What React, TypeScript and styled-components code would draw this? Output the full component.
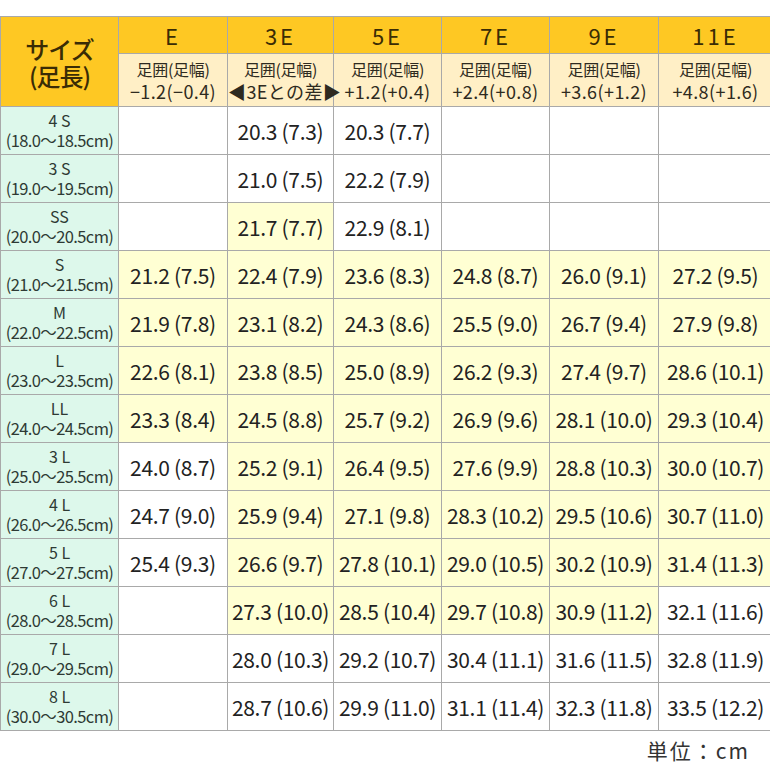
import React from "react";
import styled, { createGlobalStyle } from "styled-components";

type Row = {
    size: string;
    range: string;
    cells: (string | null)[];
    marks: boolean[];
};

const colWidths = [118, 109, 106, 108, 108, 109, 114];
const widths = ["E", "3E", "5E", "7E", "9E", "11E"];
const diffs = ["−1.2(−0.4)", "◀3Eとの差▶", "+1.2(+0.4)", "+2.4(+0.8)", "+3.6(+1.2)", "+4.8(+1.6)"];

const Y = true;
const N = false;

const rows: Row[] = [
    { size: "4 S", range: "(18.0～18.5cm)", cells: [null, "20.3 (7.3)", "20.3 (7.7)", null, null, null], marks: [N, N, N, N, N, N] },
    { size: "3 S", range: "(19.0～19.5cm)", cells: [null, "21.0 (7.5)", "22.2 (7.9)", null, null, null], marks: [N, N, N, N, N, N] },
    { size: "SS", range: "(20.0～20.5cm)", cells: [null, "21.7 (7.7)", "22.9 (8.1)", null, null, null], marks: [N, Y, N, N, N, N] },
    { size: "S", range: "(21.0～21.5cm)", cells: ["21.2 (7.5)", "22.4 (7.9)", "23.6 (8.3)", "24.8 (8.7)", "26.0 (9.1)", "27.2 (9.5)"], marks: [Y, Y, Y, Y, Y, Y] },
    { size: "M", range: "(22.0～22.5cm)", cells: ["21.9 (7.8)", "23.1 (8.2)", "24.3 (8.6)", "25.5 (9.0)", "26.7 (9.4)", "27.9 (9.8)"], marks: [Y, Y, Y, Y, Y, Y] },
    { size: "L", range: "(23.0～23.5cm)", cells: ["22.6 (8.1)", "23.8 (8.5)", "25.0 (8.9)", "26.2 (9.3)", "27.4 (9.7)", "28.6 (10.1)"], marks: [Y, Y, Y, Y, Y, Y] },
    { size: "LL", range: "(24.0～24.5cm)", cells: ["23.3 (8.4)", "24.5 (8.8)", "25.7 (9.2)", "26.9 (9.6)", "28.1 (10.0)", "29.3 (10.4)"], marks: [Y, Y, Y, Y, Y, Y] },
    { size: "3 L", range: "(25.0～25.5cm)", cells: ["24.0 (8.7)", "25.2 (9.1)", "26.4 (9.5)", "27.6 (9.9)", "28.8 (10.3)", "30.0 (10.7)"], marks: [N, Y, Y, Y, Y, Y] },
    { size: "4 L", range: "(26.0～26.5cm)", cells: ["24.7 (9.0)", "25.9 (9.4)", "27.1 (9.8)", "28.3 (10.2)", "29.5 (10.6)", "30.7 (11.0)"], marks: [N, Y, Y, Y, Y, Y] },
    { size: "5 L", range: "(27.0～27.5cm)", cells: ["25.4 (9.3)", "26.6 (9.7)", "27.8 (10.1)", "29.0 (10.5)", "30.2 (10.9)", "31.4 (11.3)"], marks: [N, Y, Y, Y, Y, Y] },
    { size: "6 L", range: "(28.0～28.5cm)", cells: [null, "27.3 (10.0)", "28.5 (10.4)", "29.7 (10.8)", "30.9 (11.2)", "32.1 (11.6)"], marks: [N, Y, Y, Y, Y, N] },
    { size: "7 L", range: "(29.0～29.5cm)", cells: [null, "28.0 (10.3)", "29.2 (10.7)", "30.4 (11.1)", "31.6 (11.5)", "32.8 (11.9)"], marks: [N, N, N, N, N, N] },
    { size: "8 L", range: "(30.0～30.5cm)", cells: [null, "28.7 (10.6)", "29.9 (11.0)", "31.1 (11.4)", "32.3 (11.8)", "33.5 (12.2)"], marks: [N, N, N, N, N, N] },
];

export default function App() {
    return (
        <Page>
            <GlobalStyle />
            <Frame>
                <Table>
                    <colgroup>
                        {colWidths.map((w, i) => (
                            <Col key={i} $w={w} />
                        ))}
                    </colgroup>
                    <thead>
                        <tr>
                            <Corner rowSpan={2}>
                                サイズ
                                <br />
                                (足長)
                            </Corner>
                            {widths.map((w) => (
                                <WidthHead key={w}>{w}</WidthHead>
                            ))}
                        </tr>
                        <tr>
                            {diffs.map((d) => (
                                <DiffHead key={d}>
                                    <DiffLabel>足囲(足幅)</DiffLabel>
                                    <DiffValue>{d}</DiffValue>
                                </DiffHead>
                            ))}
                        </tr>
                    </thead>
                    <tbody>
                        {rows.map((row) => (
                            <tr key={row.size}>
                                <SizeCell>
                                    <SizeName>{row.size}</SizeName>
                                    <SizeRange>{row.range}</SizeRange>
                                </SizeCell>
                                {row.cells.map((c, i) => (
                                    <Value key={i} $mark={row.marks[i]}>
                                        {c}
                                    </Value>
                                ))}
                            </tr>
                        ))}
                    </tbody>
                </Table>
            </Frame>
            <Unit>単位：cm</Unit>
        </Page>
    );
}

const GlobalStyle = createGlobalStyle`
    body {
        margin: 0;
        background: #fff;
        font-family: "Noto Sans CJK JP", "Noto Sans", sans-serif;
        color: #2a2a2a;
    }
`;

const Page = styled.div`
    width: 770px;
    padding-top: 16px;
    overflow: hidden;
`;

const Frame = styled.div`
    width: 770px;
    overflow: hidden;
`;

const Table = styled.table`
    width: 772px;
    table-layout: fixed;
    border-collapse: collapse;
    td, th {
        border: 1px solid #a9a9a9;
        text-align: center;
        vertical-align: middle;
        padding: 0;
    }
`;

const Col = styled.col<{ $w: number }>`
    width: ${(p) => p.$w}px;
`;

const Corner = styled.th`
    background: #fec823;
    color: #3a2c05;
    font-size: 24px;
    font-weight: 500;
    line-height: 27px;
    letter-spacing: -1px;
`;

const WidthHead = styled.th`
    height: 36px;
    background: #fec823;
    color: #3a2c05;
    font-size: 22px;
    font-weight: 400;
    letter-spacing: 3px;
`;

const DiffHead = styled.th`
    height: 52px;
    background: #ffefc6;
    color: #2e2a20;
    font-weight: 400;
    white-space: nowrap;
`;

const DiffLabel = styled.div`
    font-size: 16px;
    line-height: 21px;
    letter-spacing: -0.3px;
`;

const DiffValue = styled.div`
    font-size: 18px;
    line-height: 22px;
    letter-spacing: 0.4px;
`;

const SizeCell = styled.td`
    height: 47px;
    background: #ddf8eb;
    color: #2e3a34;
`;

const SizeName = styled.div`
    font-size: 16px;
    line-height: 19px;
`;

const SizeRange = styled.div`
    font-size: 16.5px;
    line-height: 21px;
    letter-spacing: -0.6px;
    white-space: nowrap;
`;

const Value = styled.td<{ $mark: boolean }>`
    background: ${(p) => (p.$mark ? "#ffffd3" : "#ffffff")};
    font-size: 21px;
    letter-spacing: -0.3px;
    color: #222;
    white-space: nowrap;
`;

const Unit = styled.div`
    text-align: right;
    padding: 4px 20px 0 0;
    font-size: 21px;
    letter-spacing: 2px;
    color: #333;
`;
